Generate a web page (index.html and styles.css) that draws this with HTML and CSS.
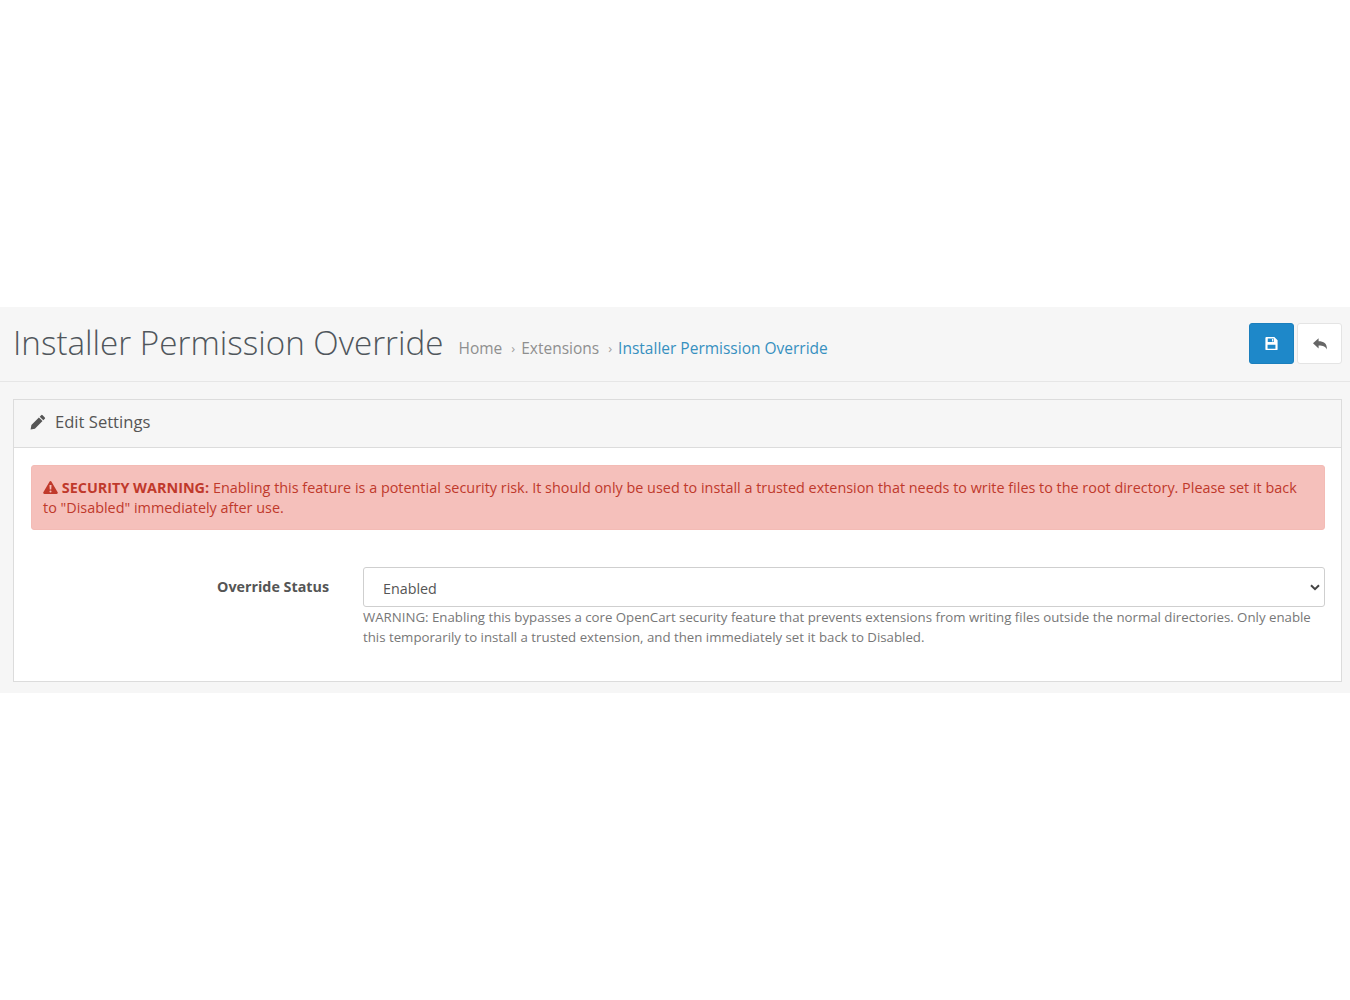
FILE: index.html
```html
<!DOCTYPE html>
<html lang="en">
<head>
<meta charset="utf-8">
<title>Installer Permission Override</title>
<link rel="stylesheet" href="styles.css">
</head>
<body>
<main class="content">
  <header class="page-header">
    <div class="title-group">
      <h1 class="page-title">Installer Permission Override</h1>
      <ul class="breadcrumb">
        <li class="crumb">Home</li>
        <li class="sep">›</li>
        <li class="crumb">Extensions</li>
        <li class="sep">›</li>
        <li class="crumb current">Installer Permission Override</li>
      </ul>
    </div>
    <div class="actions">
      <button class="btn btn-primary" type="button" aria-label="Save">
        <svg viewBox="0 0 16 16" width="15" height="15"><path fill="#fff" fill-rule="evenodd" d="M1.5 1H11l3.5 3.5V14a1 1 0 0 1-1 1h-11a1 1 0 0 1-1-1V2a1 1 0 0 1 1-1ZM4 2.6V6.4h6.6V2.6H4Zm4.6.6h1.3v2.6H8.6V3.2ZM3.8 9.2v4.4h8.4V9.2H3.8Z"/></svg>
      </button>
      <button class="btn btn-default" type="button" aria-label="Back">
        <svg viewBox="0 0 16 16" width="16" height="16"><path fill="#666" d="M6.6 2.2v3C11.6 5.2 15 7 15 13.6c-1.3-3.2-3.8-4.2-8.4-4.2v3L1 7.3l5.6-5.1Z"/></svg>
      </button>
    </div>
  </header>
  <section class="panel">
    <div class="panel-heading">
      <svg viewBox="0 0 16 16" width="16" height="16"><path fill="#555" d="M11.2 1.2a1 1 0 0 1 1.4 0l2.2 2.2a1 1 0 0 1 0 1.4l-1.5 1.5-3.6-3.6 1.5-1.5ZM8.9 3.5l3.6 3.6-7.6 7.6L.6 15.4l.8-4.3 7.5-7.6Z"/></svg>
      <span>Edit Settings</span>
    </div>
    <div class="panel-body">
      <div class="alert">
        <svg class="icon-warn" viewBox="0 0 16 14" width="15" height="13"><path fill="#c0392b" fill-rule="evenodd" d="M8 0c.5 0 .9.3 1.1.7l6.6 11.4c.5.9-.1 1.9-1.1 1.9H1.4c-1 0-1.6-1-1.1-1.9L6.9.7C7.1.3 7.5 0 8 0ZM6.9 4.2l.3 5h1.6l.3-5H6.9Zm1.1 6a1.1 1.1 0 1 0 0 2.2 1.1 1.1 0 0 0 0-2.2Z"/></svg>
        <strong>SECURITY WARNING:</strong> <span>Enabling this feature is a potential security risk. It should only be used to install a trusted extension that needs to write files to the root directory. Please set it back to "Disabled" immediately after use.</span>
      </div>
      <div class="form-row">
        <label class="form-label" for="status">Override Status</label>
        <div class="form-field">
          <div class="select-wrap">
            <select class="form-select" id="status">
              <option>Enabled</option>
              <option>Disabled</option>
            </select>
            <svg class="select-chevron" viewBox="0 0 10 7" width="10" height="7"><path fill="none" stroke="#444" stroke-width="2" d="M1 1.2 5 5.2 9 1.2"/></svg>
          </div>
          <p class="help">WARNING: Enabling this bypasses a core OpenCart security feature that prevents extensions from writing files outside the normal directories. Only enable this temporarily to install a trusted extension, and then immediately set it back to Disabled.</p>
        </div>
      </div>
    </div>
  </section>
</main>
</body>
</html>
```
FILE: styles.css
```css
* { box-sizing: border-box; }
html, body { margin: 0; padding: 0; background: #fff; }
body {
  font-family: "Open Sans", sans-serif;
  font-size: 14px;
  color: #666;
  height: 1000px;
  overflow: hidden;
}
.content {
  margin-top: 307px;
  height: 386px;
  background: #f6f6f6;
}
.page-header {
  height: 75px;
  border-bottom: 1px solid #e6e6e6;
  display: flex;
  justify-content: space-between;
  padding: 16px 8px 0 13px;
}
.title-group { display: flex; align-items: flex-start; }
.page-title {
  margin: 0;
  font-size: 33.2px;
  font-weight: 300;
  line-height: 40px;
  color: #50565c;
  white-space: nowrap;
}
.breadcrumb {
  list-style: none;
  margin: 14px 0 0 15px;
  padding: 0;
  display: flex;
  font-size: 15.5px;
  line-height: 22px;
  color: #8f8f8f;
}
.sep { margin: 0 6px 0 9px; font-size: 13px; color: #a0a0a0; }
.current { color: #3690c0; }
.actions { display: flex; gap: 3px; }
.btn {
  width: 45px;
  height: 41px;
  padding: 0;
  border-radius: 3px;
  display: flex;
  align-items: center;
  justify-content: center;
  cursor: pointer;
}
.btn-primary { background: #1e88c9; border: 1px solid #1b7fbd; }
.btn-default { background: #fff; border: 1px solid #e4e4e4; }
.panel {
  margin: 17px 8px 0 13px;
  height: 283px;
  background: #fff;
  border: 1px solid #dcdcdc;
}
.panel-heading {
  height: 48px;
  background: #f6f6f6;
  border-bottom: 1px solid #dcdcdc;
  display: flex;
  align-items: center;
  gap: 9px;
  padding: 0 0 4px 16px;
  font-size: 16.6px;
  color: #555;
}
.panel-body { padding: 17px 16px 0 17px; }
.alert {
  height: 65px;
  padding: 12px 11px 0;
  background: #f5c0bb;
  border: 1px solid #f3bbb5;
  border-radius: 3px;
  color: #c0392b;
  font-size: 14.4px;
  line-height: 20px;
}
.icon-warn { vertical-align: -1px; }
.alert strong { font-weight: 700; }
.form-row {
  display: flex;
  margin-top: 37px;
}
.form-label {
  width: 298px;
  padding-top: 10px;
  text-align: right;
  font-weight: 700;
  font-size: 14.3px;
  line-height: 20px;
  color: #555;
  flex: none;
}
.form-field { margin-left: 34px; flex: 1; min-width: 0; }
.select-wrap { position: relative; }
.form-select {
  display: block;
  width: 100%;
  height: 40px;
  padding: 2px 24px 0 19px;
  font-family: inherit;
  font-size: 14.3px;
  color: #555;
  background: #fff;
  border: 1px solid #cfcfcf;
  border-radius: 3px;
  appearance: none;
}
.select-chevron {
  position: absolute;
  top: 17px;
  right: 5px;
  pointer-events: none;
}
.help {
  margin: 0;
  font-size: 13.26px;
  line-height: 20px;
  color: #777;
}
```
